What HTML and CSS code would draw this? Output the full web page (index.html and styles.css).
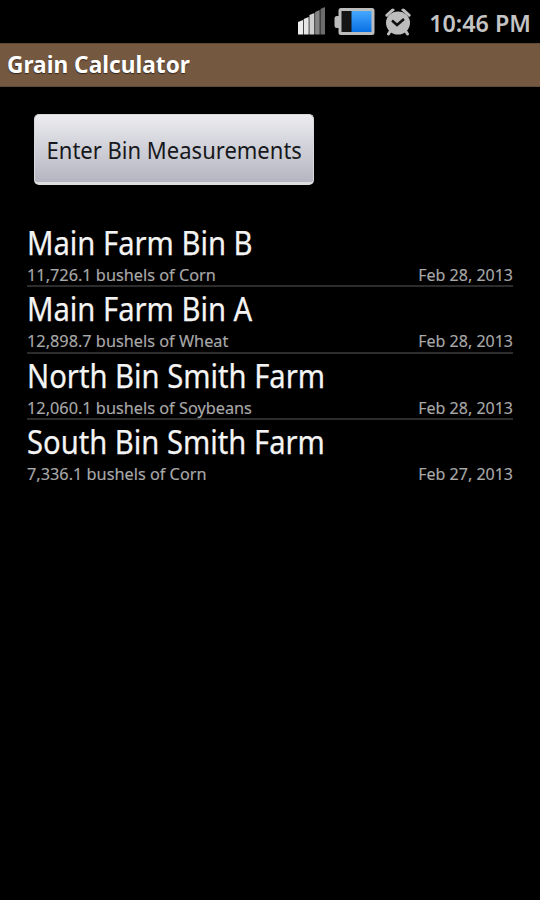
FILE: index.html
```html
<!DOCTYPE html>
<html lang="en">
<head>
<meta charset="utf-8">
<title>Grain Calculator</title>
<link rel="stylesheet" href="styles.css">
</head>
<body>
<header class="status">
  <svg class="signal" width="29" height="30" viewBox="0 0 29 30">
    <path fill="#ededed" d="M1 14l5-2v14.500H1z"/>
    <path fill="#e4e4e4" d="M6.700 11l5-2v17.500h-5z"/>
    <path fill="#cfcfcf" d="M12.400 7l5-2v21.500h-5z"/>
    <path fill="#858585" d="M18.100 4l4.600-2v24.500h-4.600z"/>
    <path fill="#6c6c6c" d="M23.400 1l4.600-2v27.500h-4.600z"/>
  </svg>
  <svg class="battery" width="41" height="28" viewBox="0 0 41 28">
    <defs><linearGradient id="charge" x1="0" y1="0" x2="0" y2="1"><stop offset="0" stop-color="#45a8ff"/><stop offset="1" stop-color="#0870e5"/></linearGradient></defs>
    <path fill="#bcbcbc" d="M7 0h31q2.500 0 2.500 2.500v22q0 2.500-2.500 2.500H7q-2.500 0-2.500-2.500V20H3Q.5 20 .5 17.500v-7Q.5 8 3 8h1.500V2.500Q4.500 0 7 0z"/>
    <path fill="#151515" d="M7.500 3H18v21H7.500z"/>
    <path fill="url(#charge)" d="M17.500 3H37.500v21h-20z"/>
  </svg>
  <svg class="alarm" width="26" height="28" viewBox="0 0 26 28">
    <g fill="#bdbdbd">
      <path d="M.5 6.500L6.500 1Q8.500-.5 10 2L2 9Q-.5 8 .5 6.500zM25.500 6.500L19.500 1Q17.500-.5 16 2l8 7q2.500-1 1.500-2.500z"/>
      <ellipse cx="13" cy="15" rx="12" ry="11.500"/>
    </g>
    <path d="M6 22l-2.500 4M20 22l2.500 4" stroke="#bdbdbd" stroke-width="3" stroke-linecap="round"/>
    <path d="M7 12.500l5 4.500 7-6" fill="none" stroke="#111" stroke-width="2.500"/>
  </svg>
  <time class="clock fit">10:46 PM</time>
</header>
<h1 class="titlebar"><span class="fit">Grain Calculator</span></h1>
<main class="content">
  <button class="enter" type="button"><span class="fit">Enter Bin Measurements</span></button>
  <ul class="bins">
    <li class="bin">
      <h2 class="name fit">Main Farm Bin B</h2>
      <div class="meta"><span class="amount fit">11,726.1 bushels of Corn</span><time class="date">Feb 28, 2013</time></div>
    </li>
    <li class="bin">
      <h2 class="name fit">Main Farm Bin A</h2>
      <div class="meta"><span class="amount fit">12,898.7 bushels of Wheat</span><time class="date">Feb 28, 2013</time></div>
    </li>
    <li class="bin">
      <h2 class="name fit">North Bin Smith Farm</h2>
      <div class="meta"><span class="amount fit">12,060.1 bushels of Soybeans</span><time class="date">Feb 28, 2013</time></div>
    </li>
    <li class="bin">
      <h2 class="name fit">South Bin Smith Farm</h2>
      <div class="meta"><span class="amount fit">7,336.1 bushels of Corn</span><time class="date">Feb 27, 2013</time></div>
    </li>
  </ul>
</main>
</body>
</html>
```
FILE: styles.css
```css
* { box-sizing: border-box; margin: 0; padding: 0; }
body { width: 540px; height: 900px; overflow: hidden; background: #000; color: #f4f4f4; font-family: "Noto Sans", "Open Sans", sans-serif; }
.fit { display: inline-block; white-space: nowrap; transform-origin: left center; }
.status { display: flex; height: 43px; align-items: flex-start; padding: 8px 9px 0 297px; }
.signal { overflow: visible; }
.battery { margin-left: 8px; }
.alarm { margin-left: 10px; }
.clock { margin-left: auto; font-size: 24px; line-height: 29px; font-weight: 600; color: #c4c4c4; transform: scaleX(.97); transform-origin: right center; }
.titlebar { height: 44px; padding-left: 7px; background: #755840; border-top: 1px solid #604a38; border-bottom: 1px solid #604a38; font-size: 23.5px; line-height: 41px; font-weight: 700; color: #fff; text-shadow: 0 1px 1px #33241a; }
.titlebar .fit { transform: scaleX(.965); }
.content { padding: 27px 27px 0; }
.enter { display: flex; width: 280px; height: 71px; margin-left: 7px; padding-top: 2px; align-items: center; justify-content: center; border: 1px solid #d9d9dc; border-bottom: 3px solid #dedee0; border-radius: 5px; background: linear-gradient(#ececef, #d8d9df 35%, #b4b5c0); font: 24px "Noto Sans", sans-serif; color: #17181c; }
.enter .fit { transform: scaleX(.917); transform-origin: center; }
.bins { margin-top: 36px; list-style: none; }
.bin { height: 66.400px; border-bottom: 2px solid #2c2c2c; }
.bin:last-child { border-bottom: 0; }
.name { display: block; width: max-content; height: 44px; font-size: 32px; line-height: 43px; font-weight: 400; transform: scaleX(.912); -webkit-text-stroke: .25px #f4f4f4; }
.meta { display: flex; justify-content: space-between; font-size: 16px; line-height: 21px; color: #a9a9a9; -webkit-text-stroke: .15px #a9a9a9; }
.amount { transform: scaleX(1.018); }
```
